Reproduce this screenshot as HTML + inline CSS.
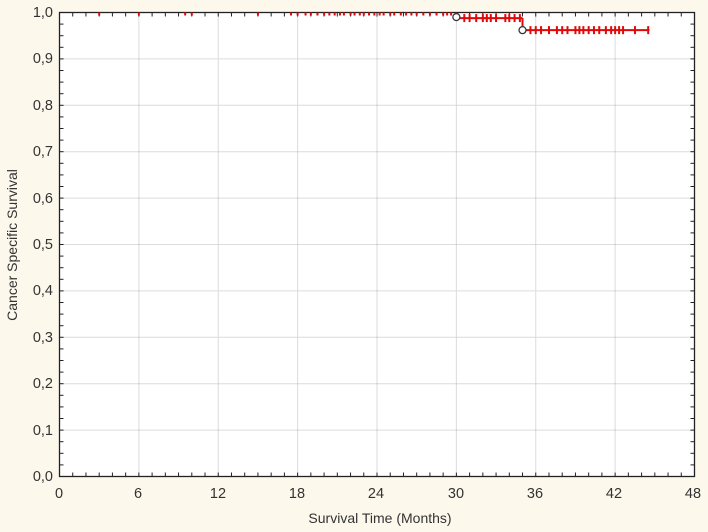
<!DOCTYPE html>
<html><head><meta charset="utf-8"><style>
html,body{margin:0;padding:0;background:#fdf8ec;}
svg{display:block}
text{font-family:"Liberation Sans",Arial,sans-serif;fill:#333}
</style></head><body>
<svg id="s" width="708" height="532" viewBox="0 0 708 532" xmlns="http://www.w3.org/2000/svg">
<rect x="0" y="0" width="708" height="532" fill="#fdf8ec"/>
<rect x="59.5" y="12.5" width="635" height="464" fill="#ffffff"/>
<g id="grid" stroke="#b8b8b8" stroke-width="1" stroke-dasharray="1,1"></g>
<g id="ticks" stroke="#222" stroke-width="1"></g>
<rect x="59.5" y="12.5" width="635" height="464" fill="none" stroke="#222" stroke-width="1.3"/>
<g id="red" stroke="#e00808" stroke-width="2"></g>
<g font-size="14.5" text-anchor="end">
<text x="53" y="17">1,0</text><text x="53" y="63">0,9</text><text x="53" y="110">0,8</text>
<text x="53" y="156">0,7</text><text x="53" y="203">0,6</text><text x="53" y="249">0,5</text>
<text x="53" y="295">0,4</text><text x="53" y="342">0,3</text><text x="53" y="388">0,2</text>
<text x="53" y="435">0,1</text><text x="53" y="481">0,0</text>
</g>
<g font-size="14.5" text-anchor="middle">
<text x="59" y="498">0</text><text x="138" y="498">6</text><text x="218" y="498">12</text>
<text x="297" y="498">18</text><text x="376" y="498">24</text><text x="456" y="498">30</text>
<text x="535" y="498">36</text><text x="614" y="498">42</text><text x="693" y="498">48</text>
</g>
<text x="380" y="523" font-size="14" text-anchor="middle">Survival Time (Months)</text>
<text transform="translate(17,245) rotate(-90)" font-size="14" text-anchor="middle">Cancer Specific Survival</text>
</svg>
<script>
var NS="http://www.w3.org/2000/svg";
function L(g,x1,y1,x2,y2){var l=document.createElementNS(NS,"line");l.setAttribute("x1",x1);l.setAttribute("y1",y1);l.setAttribute("x2",x2);l.setAttribute("y2",y2);document.getElementById(g).appendChild(l);}
var X=function(m){return 59.5+m*635/48;},Y=function(v){return 476.5-v*464;};
for(var i=1;i<8;i++){L("grid",X(i*6),12.5,X(i*6),476.5);}
for(var i=1;i<10;i++){L("grid",59.5,Y(i/10),694.5,Y(i/10));}
for(var m=1;m<48;m++){var x=X(m);L("ticks",x,476.5,x,472.5);L("ticks",x,12.5,x,16.5);}
for(var k=1;k<40;k++){var y=Y(k*0.025);L("ticks",59.5,y,63.5,y);L("ticks",694.5,y,690.5,y);}
var y1=Y(1),y2=Y(0.988),y3=Y(0.962);
L("red",X(30),y1,X(30),y2);L("red",X(30),y2,X(35),y2);L("red",X(35),y2,X(35),y3);L("red",X(35),y3,X(44.6),y3);
var c1=[3,6,9.5,10,15,17.5,18,18.6,19,19.5,20,20.4,20.8,21.2,21.5,22,22.3,22.7,23,23.4,23.8,24.2,24.5,25,25.3,25.8,26.2,26.6,27,27.5,28,28.5,29,29.3,29.6];
c1.forEach(function(m){L("red",X(m),y1,X(m),y1+3);});
var c2=[30.6,31,31.5,32,32.3,32.6,33,33.7,34,34.4,34.8];
c2.forEach(function(m){L("red",X(m),y2-4,X(m),y2+4);});
var c3=[35.6,36,36.4,37,37.6,38,38.4,39,39.3,39.6,40,40.4,40.8,41.3,41.7,42,42.3,42.6,43.5,44.5];
c3.forEach(function(m){L("red",X(m),y3-4,X(m),y3+4);});
[[30,y2-1],[35,y3]].forEach(function(p){var c=document.createElementNS(NS,"circle");c.setAttribute("cx",X(p[0]));c.setAttribute("cy",p[1]);c.setAttribute("r",3.5);c.setAttribute("fill","#fff");c.setAttribute("stroke","#334");c.setAttribute("stroke-width","1.3");document.getElementById("s").appendChild(c);});
</script>
</body></html>
